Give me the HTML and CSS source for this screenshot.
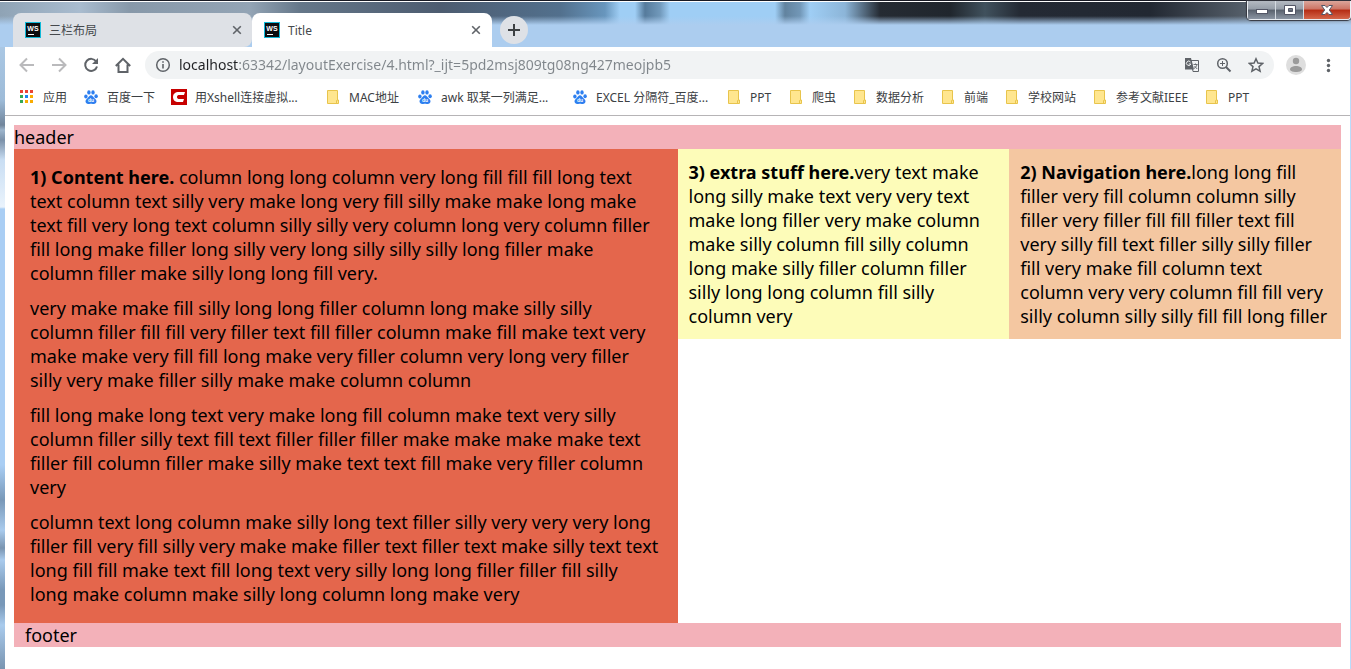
FILE: index.html
```html
<!DOCTYPE html>
<html lang="zh-CN">
<head>
<meta charset="utf-8">
<title>Title</title>
<link rel="stylesheet" href="styles.css">
</head>
<body>
<svg class="symbols" aria-hidden="true">
  <symbol id="ws" viewBox="0 0 16 16">
    <rect width="16" height="16" fill="#10b9d8"/>
    <rect x="1" y="1" width="14" height="14" fill="#0c0c0e"/>
    <text x="8" y="8.500" class="ws-text">WS</text>
    <rect x="3" y="12" width="6" height="1" fill="#fff"/>
  </symbol>
  <symbol id="paw" viewBox="0 0 14 14">
    <g fill="#2d7ff0">
      <ellipse cx="1.900" cy="6.600" rx="1.700" ry="2"/>
      <ellipse cx="4.900" cy="2.400" rx="1.700" ry="2.200"/>
      <ellipse cx="9" cy="2.400" rx="1.700" ry="2.200"/>
      <ellipse cx="12.100" cy="6.200" rx="1.700" ry="2"/>
      <path d="M7 5.300c1.500 0 2.200 1.500 3.300 2.700 1.200 1.200 2.500 2.100 2.100 3.900-.4 1.900-2.600 2.200-5.400 1.900-2.800.3-5 0-5.400-1.900-.4-1.800 1-2.700 2.100-3.900C4.800 6.800 5.500 5.300 7 5.300z"/>
    </g>
    <text x="7" y="12.300" class="paw-text">du</text>
  </symbol>
  <symbol id="folder" viewBox="0 0 12 14">
    <path d="M.5.500h10v9.500h1v3.500H.5z" fill="#ffe68f" stroke="#e8c44c"/>
    <path d="M9.500 13v-2.500h1" fill="none" stroke="#e8c44c"/>
  </symbol>
  <symbol id="close" viewBox="0 0 10 10">
    <path d="M1.200 1.200l7.600 7.600M8.800 1.200L1.200 8.800" stroke="#5f6368" stroke-width="1.600"/>
  </symbol>
</svg>

<div class="window">
  <header class="titlebar">
    <nav class="tabs">
      <div class="tab">
        <svg class="icon16"><use href="#ws"/></svg>
        <span class="tab-title">三栏布局</span>
        <button class="tab-close" aria-label="关闭"><svg><use href="#close"/></svg></button>
      </div>
      <div class="tab tab-active">
        <svg class="icon16"><use href="#ws"/></svg>
        <span class="tab-title">Title</span>
        <button class="tab-close" aria-label="关闭"><svg><use href="#close"/></svg></button>
      </div>
      <button class="new-tab" aria-label="新标签页"><svg viewBox="0 0 12 12"><path d="M6 0v12M0 6h12" stroke="#3c4043" stroke-width="2"/></svg></button>
    </nav>
    <div class="window-controls">
      <button class="control control-min" aria-label="最小化"><svg viewBox="0 0 14 10"><rect x="1.500" y="4.500" width="11" height="4" fill="#fff" stroke="#535666"/></svg></button>
      <button class="control control-max" aria-label="最大化"><svg viewBox="0 0 14 10"><path d="M1.500.500h11v9h-11zM5.500 3.500v3h4v-3z" fill="#fff" fill-rule="evenodd" stroke="#535666"/></svg></button>
      <button class="control control-close" aria-label="关闭窗口"><svg viewBox="0 0 14 10"><path d="M1.500.500h3.500l2 2 2-2h3.500L9.300 5l3.200 4.500H9l-2-2-2 2H1.500L4.700 5z" fill="#fff" stroke="#535666"/></svg></button>
    </div>
  </header>

  <div class="browser">
    <div class="toolbar">
      <div class="nav-buttons">
        <button class="tool" aria-label="后退"><svg viewBox="0 0 16 16"><path d="M15 8H2M8 1.500L1.500 8 8 14.500" fill="none" stroke="#bababc" stroke-width="2"/></svg></button>
        <button class="tool" aria-label="前进"><svg viewBox="0 0 16 16"><path d="M1 8h13M8 1.500L14.500 8 8 14.500" fill="none" stroke="#bababc" stroke-width="2"/></svg></button>
        <button class="tool" aria-label="重新加载"><svg viewBox="0 0 16 16"><path d="M13.200 4.500A6 6 0 1 0 14 9.500" fill="none" stroke="#5f6368" stroke-width="2"/><path d="M15 1v6H9z" fill="#5f6368"/></svg></button>
        <button class="tool" aria-label="主页"><svg viewBox="0 0 16 16"><path d="M.8 9L8 1.800 15.200 9M3.500 7.500V15h9V7.500" fill="none" stroke="#5f6368" stroke-width="2"/></svg></button>
      </div>
      <div class="omnibox">
        <svg class="icon16" viewBox="0 0 16 16"><circle cx="8" cy="8" r="6.300" fill="none" stroke="#5f6368" stroke-width="1.500"/><path d="M8 7v4.500M8 4.300v1.500" stroke="#5f6368" stroke-width="1.600"/></svg>
        <input class="address" type="text" aria-label="地址" value="localhost:63342/layoutExercise/4.html?_ijt=5pd2msj809tg08ng427meojpb5">
        <button class="tool" aria-label="翻译"><svg viewBox="0 0 16 16"><path d="M7 3.500h7.500v11H9z" fill="#f1f3f4" stroke="#5f6368"/><path d="M1 1h6l3 11.500H1z" fill="#5f6368"/><path d="M6.500 5A2.200 2.200 0 1 0 6.800 7H4.800" fill="none" stroke="#f1f3f4"/><path d="M9.500 7.500h4M11.500 6.500v1M13 7.500c-.5 2-1.500 3-3 4M10.500 9l2.700 3" fill="none" stroke="#5f6368" stroke-width=".9"/></svg></button>
        <button class="tool" aria-label="缩放"><svg viewBox="0 0 16 16"><circle cx="6.500" cy="6.500" r="4.800" fill="none" stroke="#5f6368" stroke-width="1.500"/><path d="M10 10l4.500 4.500" stroke="#5f6368" stroke-width="2"/><path d="M6.500 4v5M4 6.500h5" stroke="#5f6368"/></svg></button>
        <button class="tool" aria-label="收藏"><svg viewBox="0 0 16 16"><path d="M8 1.800l1.900 4.300 4.700.400L11 9.600l1.100 4.600L8 11.800l-4.100 2.400L5 9.600 1.400 6.500l4.700-.4z" fill="none" stroke="#5f6368" stroke-width="1.500"/></svg></button>
      </div>
      <button class="avatar" aria-label="用户"><svg viewBox="0 0 20 20"><circle cx="10" cy="10" r="10" fill="#dedede"/><circle cx="10" cy="6" r="3.200" fill="#9b9b9b"/><path d="M4 14.300c0-2 3-3.300 6-3.300s6 1.300 6 3.300-3 2.700-6 2.700-6-.7-6-2.700z" fill="#9b9b9b"/></svg></button>
      <button class="tool" aria-label="菜单"><svg viewBox="0 0 16 16" fill="#5f6368"><circle cx="8.500" cy="3.500" r="1.700"/><circle cx="8.500" cy="8.500" r="1.700"/><circle cx="8.500" cy="13.500" r="1.700"/></svg></button>
    </div>

    <nav class="bookmarks">
      <a href="#"><svg class="icon16" viewBox="0 0 16 16"><path d="M1 1h3v3H1zM6 1h3v3H6zM11 1h3v3h-3z" fill="#ea4335"/><path d="M1 6h3v3H1zM1 11h3v3H1z" fill="#34a853"/><path d="M6 6h3v3H6z" fill="#1a84f0"/><path d="M11 6h3v3h-3zM6 11h3v3H6zM11 11h3v3h-3z" fill="#f9ab00"/></svg>应用</a>
      <a href="#"><svg class="mark"><use href="#paw"/></svg>百度一下</a>
      <a href="#"><svg class="icon16" viewBox="0 0 16 16"><rect width="16" height="16" fill="#c70000"/><path d="M14 3H8C4 3 2 5 2 8s2 5 5.500 5H12l1-3H8.500C7 10 6 9.500 6 8s1-2 2.500-2h4.500z" fill="#fff"/></svg>用Xshell连接虚拟...</a>
      <a href="#"><svg class="mark"><use href="#folder"/></svg>MAC地址</a>
      <a href="#"><svg class="mark"><use href="#paw"/></svg>awk 取某一列满足...</a>
      <a href="#"><svg class="mark"><use href="#paw"/></svg>EXCEL 分隔符_百度...</a>
      <a href="#"><svg class="mark"><use href="#folder"/></svg>PPT</a>
      <a href="#"><svg class="mark"><use href="#folder"/></svg>爬虫</a>
      <a href="#"><svg class="mark"><use href="#folder"/></svg>数据分析</a>
      <a href="#"><svg class="mark"><use href="#folder"/></svg>前端</a>
      <a href="#"><svg class="mark"><use href="#folder"/></svg>学校网站</a>
      <a href="#"><svg class="mark"><use href="#folder"/></svg>参考文献IEEE</a>
      <a href="#"><svg class="mark"><use href="#folder"/></svg>PPT</a>
    </nav>

    <main class="page">
      <div class="page-header">header</div>
      <div class="columns">
        <article class="content">
          <p><strong>1) Content here.</strong> column long long column very long fill fill fill long text<br>
          text column text silly very make long very fill silly make make long make<br>
          text fill very long text column silly silly very column long very column filler<br>
          fill long make filler long silly very long silly silly silly long filler make<br>
          column filler make silly long long fill very.</p>
          <p>very make make fill silly long long filler column long make silly silly<br>
          column filler fill fill very filler text fill filler column make fill make text very<br>
          make make very fill fill long make very filler column very long very filler<br>
          silly very make filler silly make make column column</p>
          <p>fill long make long text very make long fill column make text very silly<br>
          column filler silly text fill text filler filler filler make make make make text<br>
          filler fill column filler make silly make text text fill make very filler column<br>
          very</p>
          <p>column text long column make silly long text filler silly very very very long<br>
          filler fill very fill silly very make make filler text filler text make silly text text<br>
          long fill fill make text fill long text very silly long long filler filler fill silly<br>
          long make column make silly long column long make very</p>
        </article>
        <aside class="side extra">
          <p><strong>3) extra stuff here.</strong>very text make<br>
          long silly make text very very text<br>
          make long filler very make column<br>
          make silly column fill silly column<br>
          long make silly filler column filler<br>
          silly long long column fill silly<br>
          column very</p>
        </aside>
        <nav class="side navigation">
          <p><strong>2) Navigation here.</strong>long long fill<br>
          filler very fill column column silly<br>
          filler very filler fill fill filler text fill<br>
          very silly fill text filler silly silly filler<br>
          fill very make fill column text<br>
          column very very column fill fill very<br>
          silly column silly silly fill fill long filler</p>
        </nav>
      </div>
      <footer class="page-footer">footer</footer>
    </main>
  </div>
</div>
</body>
</html>
```
FILE: styles.css
```css
* {
  box-sizing: border-box;
}

body {
  margin: 0;
  font-family: "Noto Sans", "Noto Sans CJK SC", sans-serif;
  color: #000;
}

button {
  padding: 0;
  border: 0;
  background: none;
}

svg {
  display: block;
  flex: none;
}

.symbols {
  position: absolute;
  width: 0;
  height: 0;
}

.ws-text {
  fill: #fff;
  font: bold 7px "Liberation Sans", sans-serif;
  text-anchor: middle;
}

.paw-text {
  fill: #fff;
  font: bold 5px "Liberation Sans", sans-serif;
  text-anchor: middle;
}

.window {
  display: flex;
  flex-direction: column;
  min-height: 100vh;
  padding: 0 1px 0 5px;
  background:
    linear-gradient(#b9dcfb, #b9dcfb) 100% 0 / 1px 100% no-repeat,
    linear-gradient(#b5d2ee 0, #9dbbd8 100px, #71859b 125px, #9db5cc 130px, #7b91a9 140px, #c9def3 160px, #eaf3fc 207px, #a9cef4 209px, #a9cef4 465px, #7898b8 500px, #a9cbed 530px, #7994b0 548px, #a9cbed 560px, #7898b8 590px, #7898b8 605px, #a9cbed 625px, #7994b0 669px);
}

.titlebar {
  display: flex;
  justify-content: space-between;
  align-items: flex-start;
  height: 47px;
  margin: 0 -1px 0 -5px;
  padding-left: 13px;
  border-top: 1px solid #181a24;
  background:
    linear-gradient(#fff, #fff) 0 0 / 100% 1px no-repeat,
    linear-gradient(transparent 15px, #accdef 24px),
    linear-gradient(90deg, #8fa3b5 0, #a9bccf 80px, #8798a9 130px, #93a4b5 250px, #657789 300px, #4d5c70 440px, #52708d 560px, #6896bd 605px, #9fcef5 620px, #9fcef5 635px, #567b9c 645px, #7199bb 660px, #9fcef5 670px, #9fcef5 775px, #62839f 785px, #7297b7 800px, #9fcef5 810px, #8cb5d8 845px, #252b33 880px, #20262d 950px, #40515d 985px, #242a34 1020px, #222832 1150px, #555f6a 1245px, #8b97a6 100%);
}

.tabs {
  display: flex;
  align-items: flex-end;
  padding-top: 12px;
}

.tab {
  display: flex;
  align-items: center;
  width: 240px;
  height: 34px;
  padding: 0 11px 0 12px;
  border-radius: 8px 8px 0 0;
  background: #dee1e6;
  font-size: 12px;
  color: #45494d;
}

.tab:first-child {
  width: 239px;
  padding-right: 10px;
  border-radius: 8px 8px 8px 0;
}

.tab-active {
  background: #fff;
}

.icon16 {
  width: 16px;
  height: 16px;
}

.tab-title {
  flex: 1;
  padding-left: 8px;
}

.tab-close svg {
  width: 10px;
  height: 10px;
}

.new-tab {
  display: grid;
  place-items: center;
  align-self: center;
  width: 28px;
  height: 28px;
  margin-left: 8px;
  border-radius: 50%;
  background: #dee1e6;
}

.new-tab svg {
  width: 12px;
  height: 12px;
}

.window-controls {
  display: flex;
  height: 19px;
  border: 1px solid #e9edf2;
  border-top: 0;
  border-radius: 0 0 4px 4px;
  box-shadow: 0 0 1px 1px #33363f;
}

.control {
  display: grid;
  place-items: center;
  width: 28px;
  border-right: 1px solid #d5dbe2;
  background: linear-gradient(#b4bac2 0, #959da8 45%, #59616d 50%, #8b95a3 100%);
}

.control svg {
  width: 14px;
  height: 10px;
}

.control-close {
  width: 46px;
  border: 0;
  border-radius: 0 0 3px 0;
  background: linear-gradient(#dba69b 0, #cc7464 45%, #b52b13 50%, #d4664a 100%);
}

.browser {
  display: flex;
  flex: 1;
  flex-direction: column;
  background: #fff;
}

.toolbar {
  display: flex;
  align-items: center;
  height: 36px;
  padding: 0 14px;
}

.nav-buttons {
  display: flex;
  gap: 16px;
  padding-right: 14px;
}

.tool svg {
  width: 16px;
  height: 16px;
}

.omnibox {
  display: flex;
  flex: 1;
  align-items: center;
  gap: 16px;
  height: 28px;
  margin-right: 12px;
  padding: 0 10px;
  border-radius: 14px;
  background: #f1f3f4;
}

.address {
  flex: 1;
  min-width: 0;
  margin-left: -8px;
  padding: 0;
  border: 0;
  outline: 0;
  background: linear-gradient(90deg, #202124 60px, #80868b 60px);
  background-clip: text;
  color: transparent;
  font: 14px/20px "Noto Sans", sans-serif;
}

.avatar {
  margin-right: 14px;
}

.avatar svg {
  width: 20px;
  height: 20px;
}

.bookmarks {
  display: grid;
  grid-template-columns: 64px 88px 154px 92px 155px 154px 62px 64px 88px 64px 88px 112px auto;
  height: 33px;
  padding: 0 14px 4px;
  border-bottom: 1px solid #b6b4b6;
}

.bookmarks a {
  display: flex;
  align-items: center;
  gap: 8px;
  color: #3c4043;
  font-size: 12px;
  text-decoration: none;
  white-space: nowrap;
}

.mark {
  width: 16px;
  height: 14px;
}

.page {
  padding: 9px;
  font-size: 18px;
  line-height: 24px;
}

.page-header,
.page-footer {
  background: #f3b1b9;
}

.page-footer {
  padding-left: 11px;
}

.columns {
  display: grid;
  grid-template-columns: 2fr 1fr 1fr;
  align-items: start;
}

.columns p {
  margin: 0;
  white-space: nowrap;
}

.content {
  display: grid;
  gap: 11px;
  min-width: 0;
  padding: 16px 16px 17px;
  background: #e4664c;
}

.side {
  min-width: 0;
  padding: 11px;
}

.extra {
  background: #fdfcb9;
}

.navigation {
  background: #f4c7a1;
}
```
